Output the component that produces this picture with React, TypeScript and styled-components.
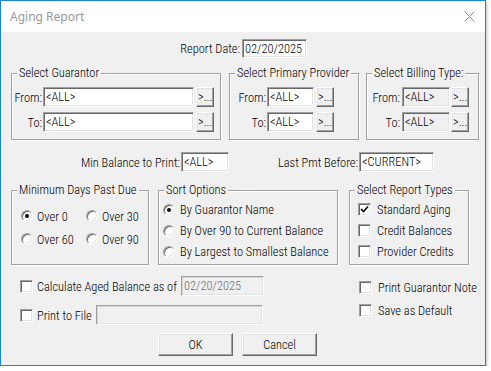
import React from 'react';
import styled, { createGlobalStyle } from 'styled-components';

const GlobalStyle = createGlobalStyle`
  html, body {
    margin: 0;
    padding: 0;
    background: #ffffff;
  }
  body {
    font-family: "Roboto Condensed", Roboto, "Liberation Sans", sans-serif;
    font-stretch: condensed;
    font-weight: 300;
    font-size: 12.4px;
    color: #000;
  }
`

const Window = styled.div`
  width: 486px;
  height: 366px;
  box-sizing: border-box;
  border: 1px solid #1883d7;
  background: #f0f0f0;
  display: flex;
  flex-direction: column;
  box-shadow: 1px 1px 3px rgba(0, 0, 0, 0.25);
`

const TitleBar = styled.div`
  height: 31px;
  flex: none;
  background: #fff;
  display: flex;
  align-items: center;
  justify-content: space-between;
  padding: 0 10px 0 9px;
`

const TitleText = styled.span`
  font-family: "Segoe UI", "Noto Sans", "Open Sans", sans-serif;
  font-stretch: normal;
  font-weight: 400;
  font-size: 12px;
  color: #999;
`

const Row = styled.div<{ $mt: number; $pl?: number }>`
  display: flex;
  align-items: center;
  margin-top: ${p => p.$mt}px;
  padding-left: ${p => p.$pl || 0}px;
`

const LabelCell = styled.span<{ $w: number; $pr?: number }>`
  width: ${p => p.$w}px;
  flex: none;
  box-sizing: border-box;
  text-align: right;
  padding-right: ${p => p.$pr ?? 1}px;
  white-space: nowrap;
`

const TextBox = styled.div<{ $w: number; $h?: number; $ro?: boolean; $off?: boolean }>`
  width: ${p => p.$w}px;
  height: ${p => p.$h || 20}px;
  flex: none;
  box-sizing: border-box;
  border: 1px solid;
  border-color: #a0a0a0 #fff #fff #a0a0a0;
  box-shadow: inset 1px 1px 0 ${p => (p.$off ? '#d4d4d4' : '#696969')},
    inset -1px -1px 0 #e3e3e3;
  background: ${p => (p.$ro || p.$off ? '#f0f0f0' : '#fff')};
  color: ${p => (p.$off ? '#6d6d6d' : '#000')};
  padding: 0 0 0 2px;
  line-height: 17px;
  white-space: nowrap;
  overflow: hidden;
`

const SmallButton = styled.div<{ $ml: number }>`
  width: 18px;
  height: 20px;
  flex: none;
  box-sizing: border-box;
  margin-left: ${p => p.$ml}px;
  border: 1px solid;
  border-color: #fff #696969 #696969 #fff;
  box-shadow: inset -1px -1px 0 #a0a0a0, inset 1px 1px 0 #e3e3e3;
  background: #f0f0f0;
  line-height: 18px;
  padding-left: 1px;
  white-space: nowrap;
  overflow: hidden;
`

const GroupRow = styled.div<{ $mt: number }>`
  display: flex;
  align-items: flex-start;
  margin-top: ${p => p.$mt}px;
  padding-left: 10px;
`

const Group = styled.div<{ $w: number; $h: number; $mr?: number }>`
  position: relative;
  flex: none;
  box-sizing: border-box;
  width: ${p => p.$w}px;
  height: ${p => p.$h}px;
  margin-right: ${p => p.$mr || 0}px;
  border: 1px solid #a0a0a0;
  box-shadow: inset 1px 1px 0 #fff, 1px 1px 0 #fff;
`

const Legend = styled.span`
  position: absolute;
  top: -9px;
  left: 5px;
  padding: 0 2px;
  background: #f0f0f0;
  line-height: 16px;
  white-space: nowrap;
`

const FieldGrid = styled.div<{ $label: number }>`
  display: grid;
  grid-template-columns: ${p => p.$label}px auto;
  row-gap: 5px;
  align-items: center;
  justify-content: start;
  padding-top: 13px;
`

const FieldPair = styled.div`
  display: flex;
`

const RadioGrid = styled.div`
  display: grid;
  grid-template-columns: 65px auto;
  grid-auto-rows: 20px;
  row-gap: 3px;
  padding: 15px 0 0 9px;
`

const OptionList = styled.div<{ $pl: number }>`
  display: flex;
  flex-direction: column;
  padding: 8px 0 0 ${p => p.$pl}px;
`

const Option = styled.div<{ $gap: number; $h?: number }>`
  display: flex;
  align-items: center;
  gap: ${p => p.$gap}px;
  height: ${p => p.$h || 21}px;
  white-space: nowrap;
`

const RadioCircle = styled.span<{ $on?: boolean }>`
  position: relative;
  flex: none;
  width: 12px;
  height: 12px;
  box-sizing: border-box;
  border-radius: 50%;
  background: #fff;
  border: 1px solid;
  border-color: #a0a0a0 #fff #fff #a0a0a0;
  box-shadow: inset 1px 1px 0 #696969, inset -1px -1px 0 #e3e3e3;

  &::after {
    content: '';
    display: ${p => (p.$on ? 'block' : 'none')};
    position: absolute;
    left: 3px;
    top: 3px;
    width: 4px;
    height: 4px;
    border-radius: 50%;
    background: #000;
  }
`

const CheckSquare = styled.span`
  flex: none;
  width: 13px;
  height: 13px;
  box-sizing: border-box;
  background: #fff;
  border: 1px solid;
  border-color: #a0a0a0 #fff #fff #a0a0a0;
  box-shadow: inset 1px 1px 0 #696969, inset -1px -1px 0 #e3e3e3;
  display: flex;
  align-items: center;
  justify-content: center;
`

const Bottom = styled.div`
  display: flex;
  align-items: flex-start;
`

const LeftCol = styled.div`
  width: 358px;
  flex: none;
  box-sizing: border-box;
  padding-left: 19px;
  display: flex;
  flex-direction: column;
`

const RightCol = styled.div`
  display: flex;
  flex-direction: column;
  gap: 3px;
  padding-top: 12px;
`

const CheckCell = styled.div<{ $w: number }>`
  width: ${p => p.$w}px;
  flex: none;
  display: flex;
  align-items: center;
  gap: 4px;
  white-space: nowrap;
`

const ButtonRow = styled.div`
  display: flex;
  gap: 9px;
  margin: 8px 0 0 138px;
`

const PushButton = styled.div`
  width: 75px;
  height: 23px;
  box-sizing: border-box;
  border: 1px solid;
  border-color: #fff #696969 #696969 #fff;
  box-shadow: inset -1px -1px 0 #a0a0a0, inset 1px 1px 0 #e3e3e3;
  background: #f0f0f0;
  display: flex;
  align-items: center;
  justify-content: center;
`

function Check({ on }: { on?: boolean }) {
  return (
    <CheckSquare>
      {on && (
        <svg width="9" height="9" viewBox="0 0 9 9">
          <path d="M1 4 L3.5 6.5 L8 1.5" fill="none" stroke="#000" strokeWidth="1.7" />
        </svg>
      )}
    </CheckSquare>
  )
}

function RangeFields({ label, input, b1, pr, ro }: { label: number; input: number; b1: number; pr?: number; ro?: boolean }) {
  return (
    <FieldGrid $label={label}>
      <LabelCell $w={label} $pr={pr ?? 1}>From:</LabelCell>
      <FieldPair>
        <TextBox $w={input} $ro={ro}>&lt;ALL&gt;</TextBox>
        <SmallButton $ml={b1}>&gt;...</SmallButton>
      </FieldPair>
      <LabelCell $w={label} $pr={pr ?? 1}>To:</LabelCell>
      <FieldPair>
        <TextBox $w={input} $ro={ro}>&lt;ALL&gt;</TextBox>
        <SmallButton $ml={b1}>&gt;...</SmallButton>
      </FieldPair>
    </FieldGrid>
  )
}

export default function App() {
  return (
    <>
      <GlobalStyle />
      <Window>
        <TitleBar>
          <TitleText>Aging Report</TitleText>
          <svg width="11" height="11" viewBox="0 0 11 11">
            <path d="M0.5 0.5 L10.5 10.5 M10.5 0.5 L0.5 10.5" stroke="#8a8a8a" strokeWidth="1" />
          </svg>
        </TitleBar>

        <Row $mt={7}>
          <LabelCell $w={241} $pr={2}>Report Date:</LabelCell>
          <TextBox $w={65} $h={19}>02/20/2025</TextBox>
        </Row>

        <GroupRow $mt={15}>
          <Group $w={210} $h={67} $mr={8}>
            <Legend>Select Guarantor</Legend>
            <RangeFields label={31} input={151} b1={2} />
          </Group>
          <Group $w={130} $h={67} $mr={7}>
            <Legend>Select Primary Provider</Legend>
            <RangeFields label={37} input={47} b1={2} />
          </Group>
          <Group $w={113} $h={67}>
            <Legend>Select Billing Type:</Legend>
            <RangeFields label={35} input={48} b1={1} pr={2} ro />
          </Group>
        </GroupRow>

        <Row $mt={12}>
          <LabelCell $w={180}>Min Balance to Print:</LabelCell>
          <TextBox $w={48}>&lt;ALL&gt;</TextBox>
          <LabelCell $w={130}>Last Pmt Before:</LabelCell>
          <TextBox $w={75}>&lt;CURRENT&gt;</TextBox>
        </Row>

        <GroupRow $mt={18}>
          <Group $w={138} $h={75} $mr={9}>
            <Legend>Minimum Days Past Due</Legend>
            <RadioGrid>
              <Option $gap={4} $h={20}><RadioCircle $on />Over 0</Option>
              <Option $gap={4} $h={20}><RadioCircle />Over 30</Option>
              <Option $gap={4} $h={20}><RadioCircle />Over 60</Option>
              <Option $gap={4} $h={20}><RadioCircle />Over 90</Option>
            </RadioGrid>
          </Group>
          <Group $w={180} $h={75} $mr={11}>
            <Legend>Sort Options</Legend>
            <OptionList $pl={4}>
              <Option $gap={5}><RadioCircle $on />By Guarantor Name</Option>
              <Option $gap={5}><RadioCircle />By Over 90 to Current Balance</Option>
              <Option $gap={5}><RadioCircle />By Largest to Smallest Balance</Option>
            </OptionList>
          </Group>
          <Group $w={120} $h={75}>
            <Legend>Select Report Types</Legend>
            <OptionList $pl={8}>
              <Option $gap={6}><Check on />Standard Aging</Option>
              <Option $gap={6}><Check />Credit Balances</Option>
              <Option $gap={6}><Check />Provider Credits</Option>
            </OptionList>
          </Group>
        </GroupRow>

        <Bottom>
          <LeftCol>
            <Row $mt={11}>
              <CheckCell $w={161}><Check />Calculate Aged Balance as of</CheckCell>
              <TextBox $w={83} $off>02/20/2025</TextBox>
            </Row>
            <Row $mt={9}>
              <CheckCell $w={76}><Check />Print to File</CheckCell>
              <TextBox $w={167} $off />
            </Row>
            <ButtonRow>
              <PushButton>OK</PushButton>
              <PushButton>Cancel</PushButton>
            </ButtonRow>
          </LeftCol>
          <RightCol>
            <Option $gap={6} $h={20}><Check />Print Guarantor Note</Option>
            <Option $gap={6} $h={20}><Check />Save as Default</Option>
          </RightCol>
        </Bottom>
      </Window>
    </>
  )
}
